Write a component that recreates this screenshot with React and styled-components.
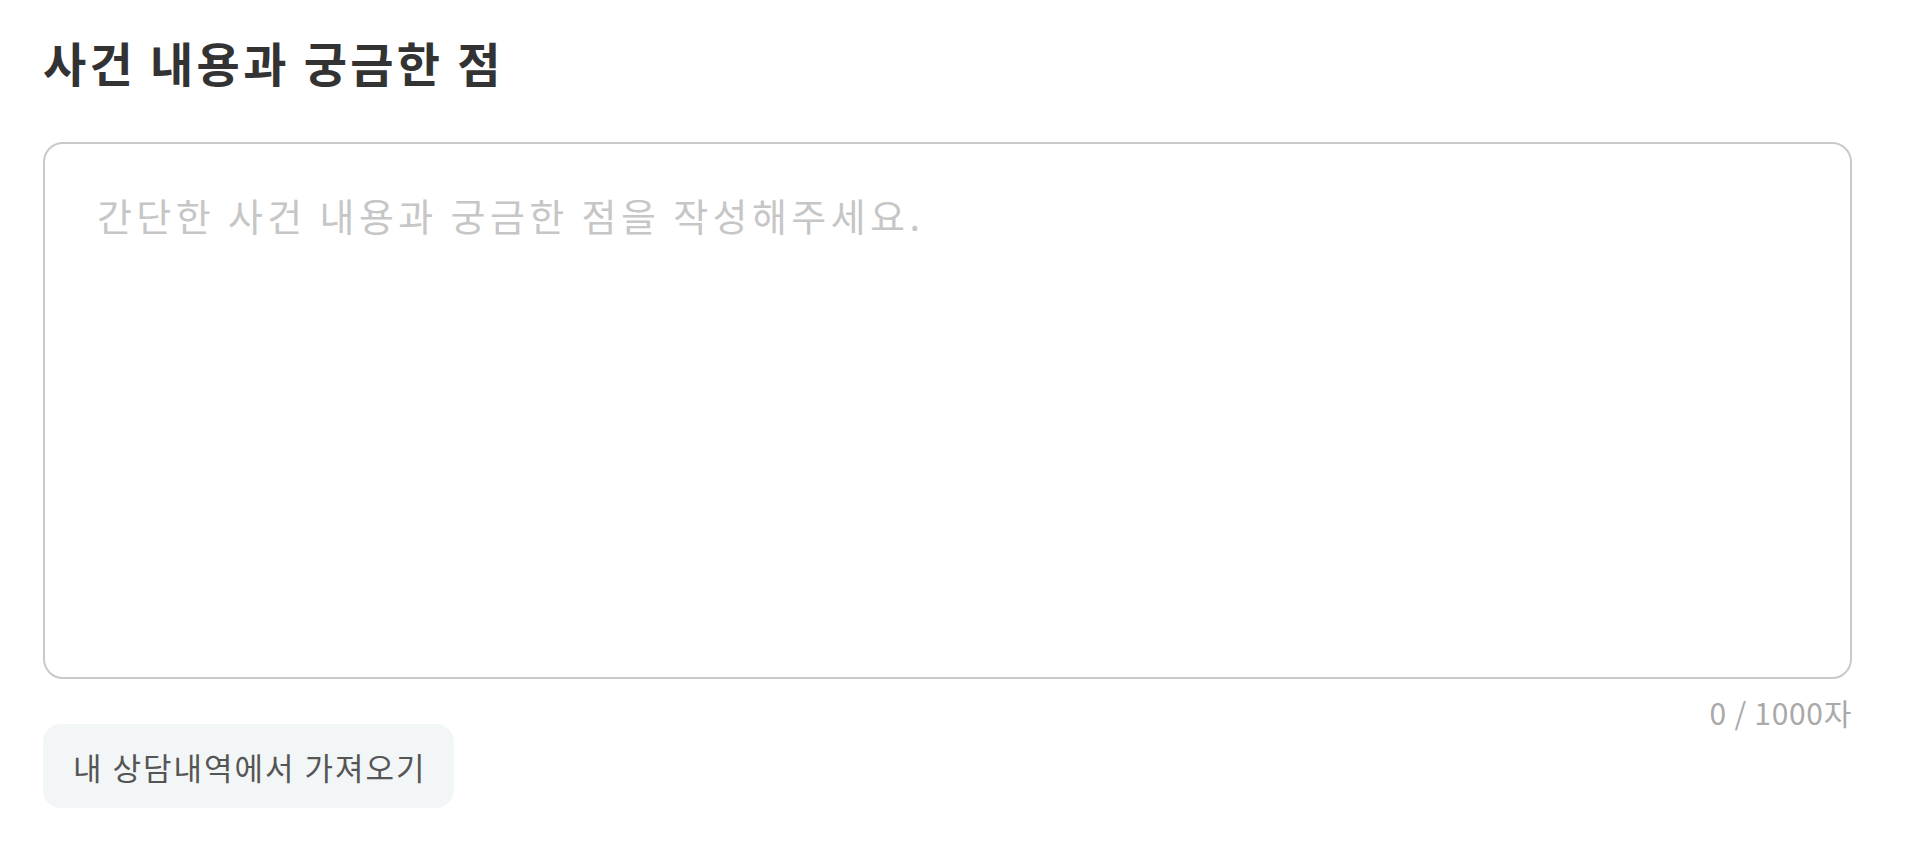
import React, { useState } from 'react';
import styled, { createGlobalStyle } from 'styled-components';

const GlobalStyle = createGlobalStyle`
  * {
    box-sizing: border-box;
  }
  body {
    margin: 0;
    background: #ffffff;
    font-family: 'Noto Sans CJK KR', 'Noto Sans', sans-serif;
  }
`;

const MAX_LENGTH = 1000;

const App = () => {
  const [text, setText] = useState('');

  return (
    <>
      <GlobalStyle />
      <Wrapper>
        <Title>사건 내용과 궁금한 점</Title>
        <TextBox
          value={text}
          maxLength={MAX_LENGTH}
          placeholder='간단한 사건 내용과 궁금한 점을 작성해주세요.'
          onChange={(e) => setText(e.target.value)}
        />
        <Counter>
          {text.length} / {MAX_LENGTH}자
        </Counter>
        <ImportButton type='button'>내 상담내역에서 가져오기</ImportButton>
      </Wrapper>
    </>
  );
};

const Wrapper = styled.section`
  display: flex;
  flex-direction: column;
  align-items: flex-start;
  padding: 34px 56px 40px 43px;
`;

const Title = styled.h2`
  margin: 0;
  font-size: 47px;
  line-height: 56px;
  font-weight: 700;
  letter-spacing: 3.3px;
  color: #333333;
`;

const TextBox = styled.textarea`
  display: block;
  width: 100%;
  height: 537px;
  margin-top: 52px;
  padding: 42px 52px 36px;
  border: 2px solid #c9c9c9;
  border-radius: 20px;
  resize: none;
  outline: none;
  font-family: inherit;
  font-size: 38px;
  line-height: 57px;
  letter-spacing: 4.4px;
  color: #333333;

  &::placeholder {
    color: #c6c6c6;
  }
`;

const Counter = styled.div`
  align-self: flex-end;
  margin-top: 21px;
  font-size: 30px;
  line-height: 24px;
  letter-spacing: 0.7px;
  color: #a9a9a9;
`;

const ImportButton = styled.button`
  display: inline-flex;
  align-items: center;
  height: 84px;
  margin-top: 0;
  padding: 0 27px 0 30px;
  border: none;
  border-radius: 18px;
  background: #f3f6f7;
  font-family: inherit;
  font-size: 31px;
  letter-spacing: 2px;
  color: #555555;
  cursor: pointer;
`;

export default App;
